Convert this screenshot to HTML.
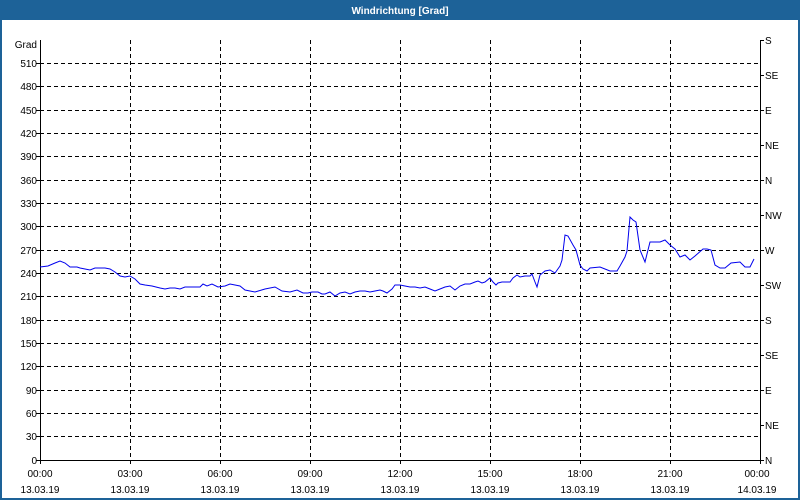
<!DOCTYPE html>
<html><head><meta charset="utf-8"><style>
html,body{margin:0;padding:0;width:800px;height:500px;overflow:hidden;background:#fff;font-family:"Liberation Sans",sans-serif;}
</style></head><body>
<svg width="800" height="500" xmlns="http://www.w3.org/2000/svg" font-family="Liberation Sans, sans-serif" font-size="10">
<rect x="0" y="0" width="800" height="500" fill="#fff"/>
<rect x="0" y="0" width="800" height="20" fill="#1d6298"/>
<rect x="0" y="20" width="2" height="480" fill="#1d6298"/>
<rect x="798" y="20" width="2" height="480" fill="#1d6298"/>
<rect x="0" y="498" width="800" height="2" fill="#1d6298"/>
<text x="400" y="14" fill="#fff" font-weight="bold" text-anchor="middle" font-size="10">Windrichtung [Grad]</text>
<g stroke="#000" stroke-width="1" stroke-dasharray="4,3" fill="none">
<path d="M40 63.5H760M40 86.5H760M40 110.5H760M40 133.5H760M40 156.5H760M40 180.5H760M40 203.5H760M40 226.5H760M40 250.5H760M40 273.5H760M40 296.5H760M40 320.5H760M40 343.5H760M40 366.5H760M40 390.5H760M40 413.5H760M40 436.5H760"/>
<path d="M130.5 40V460M220.5 40V460M310.5 40V460M400.5 40V460M490.5 40V460M580.5 40V460M670.5 40V460"/>
</g>
<g stroke="#000" stroke-width="1" fill="none">
<path d="M40.5 40V460.5H760.5V40"/>
<path d="M760 40.5h4M760 75.5h4M760 110.5h4M760 145.5h4M760 180.5h4M760 215.5h4M760 250.5h4M760 285.5h4M760 320.5h4M760 355.5h4M760 390.5h4M760 425.5h4M760 460.5h4"/>
<path d="M36 63.5h4M36 86.5h4M36 110.5h4M36 133.5h4M36 156.5h4M36 180.5h4M36 203.5h4M36 226.5h4M36 250.5h4M36 273.5h4M36 296.5h4M36 320.5h4M36 343.5h4M36 366.5h4M36 390.5h4M36 413.5h4M36 436.5h4M36 460.5h4"/>
<path d="M40.5 460v4M130.5 460v4M220.5 460v4M310.5 460v4M400.5 460v4M490.5 460v4M580.5 460v4M670.5 460v4M760.5 460v4"/>
</g>
<g fill="#000" text-anchor="end">
<text x="37" y="48">Grad</text>
<text x="37" y="67">510</text><text x="37" y="90">480</text><text x="37" y="114">450</text><text x="37" y="137">420</text><text x="37" y="160">390</text><text x="37" y="184">360</text><text x="37" y="207">330</text><text x="37" y="230">300</text><text x="37" y="254">270</text><text x="37" y="277">240</text><text x="37" y="300">210</text><text x="37" y="324">180</text><text x="37" y="347">150</text><text x="37" y="370">120</text><text x="37" y="394">90</text><text x="37" y="417">60</text><text x="37" y="440">30</text><text x="37" y="464">0</text>
</g>
<g fill="#000">
<text x="765" y="44">S</text><text x="765" y="79">SE</text><text x="765" y="114">E</text><text x="765" y="149">NE</text><text x="765" y="184">N</text><text x="765" y="219">NW</text><text x="765" y="254">W</text><text x="765" y="289">SW</text><text x="765" y="324">S</text><text x="765" y="359">SE</text><text x="765" y="394">E</text><text x="765" y="429">NE</text><text x="765" y="464">N</text>
</g>
<g fill="#000" text-anchor="middle">
<text x="40" y="477">00:00</text><text x="130" y="477">03:00</text><text x="220" y="477">06:00</text><text x="310" y="477">09:00</text><text x="400" y="477">12:00</text><text x="490" y="477">15:00</text><text x="580" y="477">18:00</text><text x="670" y="477">21:00</text><text x="757" y="477">00:00</text>
<text x="40" y="493">13.03.19</text><text x="130" y="493">13.03.19</text><text x="220" y="493">13.03.19</text><text x="310" y="493">13.03.19</text><text x="400" y="493">13.03.19</text><text x="490" y="493">13.03.19</text><text x="580" y="493">13.03.19</text><text x="670" y="493">13.03.19</text><text x="757" y="493">14.03.19</text>
</g>
<polyline fill="none" stroke="#0000ee" stroke-width="1" points="40,267 48,266 55,263 60,261 65,263 70,267 77,267 80,268 85,269 90,270 95,268 100,268 105,268 110,269 115,272 120,276 125,277 130,276 135,279 140,284 145,285 152,286 160,288 165,289 170,288 175,288 180,289 185,287 190,287 200,287 203,284 207,286 212,284 218,287 225,286 230,284 240,286 245,290 255,292 265,289 275,287 282,291 290,292 297,290 303,293 308,293 312,292 318,292 322,294 325,294 330,292 335,296 340,293 345,292 350,294 355,292 360,291 365,291 370,292 375,291 380,290 383,291 387,293 392,289 395,285 400,285 405,286 410,287 415,287 420,288 425,287 430,289 435,291 440,289 445,287 450,286 455,290 460,286 465,284 470,284 475,282 478,281 482,283 485,282 490,278 493,282 496,285 498,283 502,282 505,282 510,282 513,278 517,275 520,277 525,276 530,276 532,274 535,282 537,287 540,275 545,271 550,270 555,273 560,266 562,260 565,235 568,236 573,245 576,250 580,265 583,269 587,271 590,268 600,267 605,269 610,271 617,271 620,266 625,257 627,251 630,217 633,220 636,222 640,250 645,262 650,242 660,242 665,240 670,245 675,249 680,257 685,255 690,260 695,256 703,249 707,249 711,250 715,265 720,268 725,268 731,263 740,262 745,267 750,267 754,259"/>
</svg>
</body></html>
